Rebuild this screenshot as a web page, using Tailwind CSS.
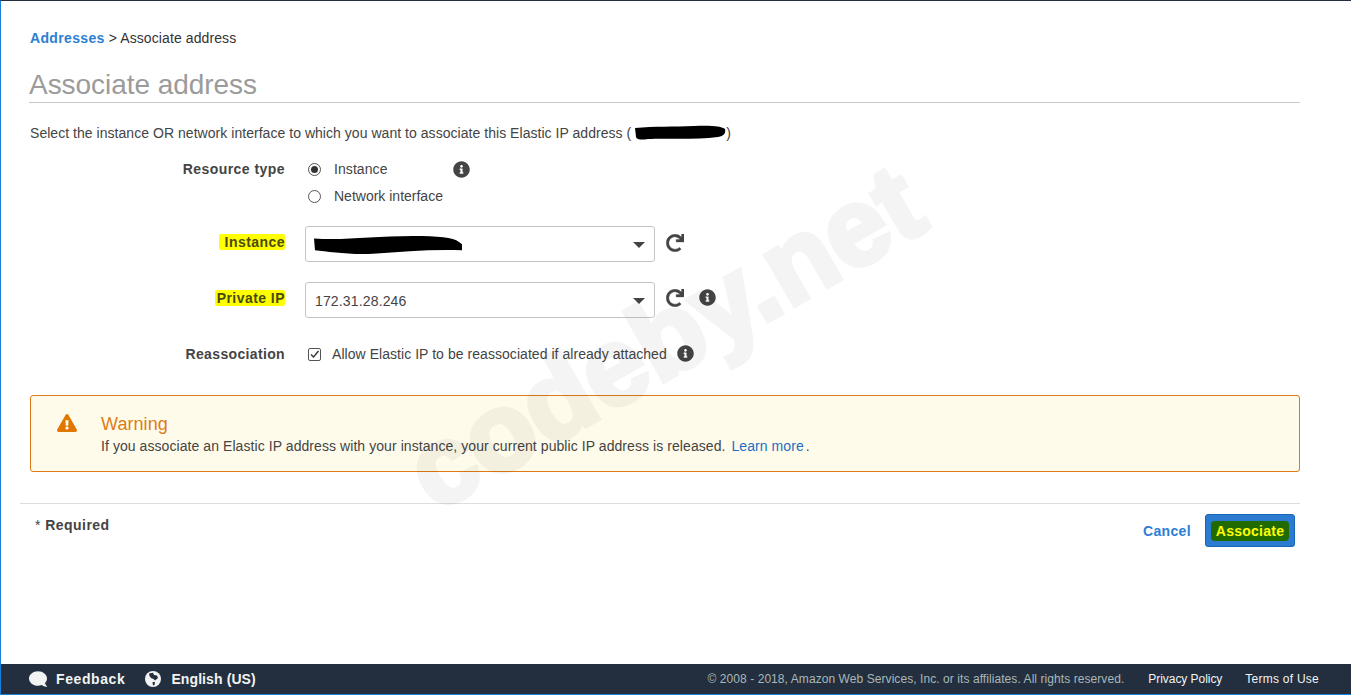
<!DOCTYPE html>
<html lang="en">
<head>
    <meta charset="UTF-8">
    <title>Associate address</title>
    <script src="https://cdn.jsdelivr.net/npm/@tailwindcss/browser@4"></script>
</head>
<body class="font-['Liberation_Sans',Arial,sans-serif] text-[#444] bg-white">
    <div class="relative h-[695px] flex flex-col overflow-hidden border-l border-t border-l-[#1a7fd6] border-t-[#232f3e]">
        <!-- Watermark -->
        <div class="absolute left-[377px] top-[281px] -rotate-[30deg] text-[110px] leading-none font-bold text-black opacity-[0.04] [-webkit-text-stroke:5px_black] pointer-events-none select-none whitespace-nowrap">codeby.net</div>

        <main class="flex-1 pl-[29px] pr-[51px] tracking-[0.07px]">
            <!-- Breadcrumb -->
            <div class="mt-[29px] text-[14px] leading-4 h-4">
                <a class="font-bold tracking-[0.35px] text-[#2b7ed3]">Addresses</a> <span class="text-[#333] tracking-[0.1px]">&gt; Associate address</span>
            </div>

            <h1 class="-ml-[1px] mt-[23px] text-[28px] leading-8 h-[33px] tracking-[-0.05px] text-[#9b9b9b] border-b border-[#c8c8c8] box-content">Associate address</h1>

            <p class="mt-[22px] text-[14px] leading-4 h-4 flex items-center whitespace-pre tracking-[0.04px]">Select the instance OR network interface to which you want to associate this Elastic IP address (<svg class="ml-[3px] w-[92px] h-[16px]" viewBox="0 0 92 16"><path d="M1 3 C20 1 40 2 60 1 C75 0 88 1 91 4 C92 8 90 11 84 12 C60 15 30 13 14 14 C8 15 3 15 2 12 Z" fill="#000"/></svg><span>)</span></p>

            <!-- Form -->
            <div class="mt-[19px] flex flex-col">
                <div class="flex h-[54px]">
                    <label class="w-[255px] text-right text-[14px] font-bold tracking-[0.45px] leading-4 pt-[1px]">Resource type</label>
                    <div class="ml-[23px] flex flex-col text-[14px] leading-4">
                        <div class="flex items-center h-[18px]">
                            <span class="w-[13px] h-[13px] rounded-full border border-[#555] flex items-center justify-center"><span class="w-[7px] h-[7px] rounded-full bg-[#333]"></span></span>
                            <span class="ml-[13px] w-[119px]">Instance</span>
                            <svg class="w-[17px] h-[17px]" viewBox="0 0 512 512"><path fill="#444" d="M256 8C119.043 8 8 119.083 8 256c0 136.997 111.043 248 248 248s248-111.003 248-248C504 119.083 392.957 8 256 8zm0 110c23.196 0 42 18.804 42 42s-18.804 42-42 42-42-18.804-42-42 18.804-42 42-42zm56 254c0 6.627-5.373 12-12 12h-88c-6.627 0-12-5.373-12-12v-24c0-6.627 5.373-12 12-12h12v-64h-12c-6.627 0-12-5.373-12-12v-24c0-6.627 5.373-12 12-12h64c6.627 0 12 5.373 12 12v100h12c6.627 0 12 5.373 12 12v24z"/></svg>
                        </div>
                        <div class="flex items-center h-[18px] mt-[9px]">
                            <span class="w-[13px] h-[13px] rounded-full border border-[#555]"></span>
                            <span class="ml-[13px] tracking-normal">Network interface</span>
                        </div>
                    </div>
                </div>

                <div class="flex mt-[12px] h-[36px]">
                    <div class="w-[255px] flex justify-end items-start pt-[8px]">
                        <label class="bg-[#ffff00] rounded-[2px] text-[14px] font-bold tracking-[0.45px] leading-4 text-[#4a4a10] pl-[6px]">Instance</label>
                    </div>
                    <div class="ml-[20px] w-[350px] h-[36px] border border-[#c4c4c4] rounded-[3px] flex items-center justify-between pl-[7px] pr-[9px]">
                        <svg class="w-[150px] h-[19px] mt-[2px]" viewBox="0 0 150 16" preserveAspectRatio="none"><path d="M1 2 C30 4 60 0 100 0 C125 0 140 1 146 5 L149 7 L149 12 C120 11 90 13 60 15 C35 16 15 13 2 12 Z" fill="#000"/></svg>
                        <span class="w-0 h-0 border-x-[6px] border-x-transparent border-t-[6px] border-t-[#444] mt-[1px]"></span>
                    </div>
                    <svg class="ml-[11px] mt-[8px] w-[18px] h-[18px]" viewBox="0 0 512 512"><path fill="#444" stroke="#444" stroke-width="12" d="M500.33 0h-47.41a12 12 0 0 0-12 12.57l4 82.76A247.42 247.42 0 0 0 256 8C119.34 8 7.9 119.53 8 256.19 8.1 393.07 119.1 504 256 504a247.1 247.1 0 0 0 166.18-63.91 12 12 0 0 0 .48-17.43l-34-34a12 12 0 0 0-16.38-.55A176 176 0 1 1 402.1 157.8l-101.53-4.87a12 12 0 0 0-12.57 12v47.41a12 12 0 0 0 12 12h200.33a12 12 0 0 0 12-12V12a12 12 0 0 0-12-12z"/></svg>
                </div>

                <div class="flex mt-[20px] h-[36px]">
                    <div class="w-[255px] flex justify-end items-start pt-[8px]">
                        <label class="bg-[#ffff00] rounded-[2px] text-[14px] font-bold tracking-[0.45px] leading-4 text-[#4a4a10] pl-[2px]">Private IP</label>
                    </div>
                    <div class="ml-[20px] w-[350px] h-[36px] border border-[#c4c4c4] rounded-[3px] flex items-center justify-between pl-[9px] pr-[9px] text-[14px]">
                        <span class="mt-[2px] tracking-[0.15px]">172.31.28.246</span>
                        <span class="w-0 h-0 border-x-[6px] border-x-transparent border-t-[6px] border-t-[#444] mt-[1px]"></span>
                    </div>
                    <svg class="ml-[11px] mt-[7px] w-[18px] h-[18px]" viewBox="0 0 512 512"><path fill="#444" stroke="#444" stroke-width="12" d="M500.33 0h-47.41a12 12 0 0 0-12 12.57l4 82.76A247.42 247.42 0 0 0 256 8C119.34 8 7.9 119.53 8 256.19 8.1 393.07 119.1 504 256 504a247.1 247.1 0 0 0 166.18-63.91 12 12 0 0 0 .48-17.43l-34-34a12 12 0 0 0-16.38-.55A176 176 0 1 1 402.1 157.8l-101.53-4.87a12 12 0 0 0-12.57 12v47.41a12 12 0 0 0 12 12h200.33a12 12 0 0 0 12-12V12a12 12 0 0 0-12-12z"/></svg>
                    <svg class="ml-[15px] mt-[7px] w-[17px] h-[17px]" viewBox="0 0 512 512"><path fill="#444" d="M256 8C119.043 8 8 119.083 8 256c0 136.997 111.043 248 248 248s248-111.003 248-248C504 119.083 392.957 8 256 8zm0 110c23.196 0 42 18.804 42 42s-18.804 42-42 42-42-18.804-42-42 18.804-42 42-42zm56 254c0 6.627-5.373 12-12 12h-88c-6.627 0-12-5.373-12-12v-24c0-6.627 5.373-12 12-12h12v-64h-12c-6.627 0-12-5.373-12-12v-24c0-6.627 5.373-12 12-12h64c6.627 0 12 5.373 12 12v100h12c6.627 0 12 5.373 12 12v24z"/></svg>
                </div>

                <div class="flex mt-[27px] h-[18px] items-center">
                    <label class="w-[255px] text-right text-[14px] font-bold tracking-[0.35px] leading-4">Reassociation</label>
                    <span class="ml-[23px] w-[13px] h-[13px] border border-[#555] rounded-[2px] flex items-center justify-center">
                        <svg class="w-[11px] h-[11px]" viewBox="0 0 11 11"><path d="M2 5.5 L4.5 8 L9.5 2" fill="none" stroke="#333" stroke-width="1.4"/></svg>
                    </span>
                    <span class="ml-[11px] text-[14px] leading-4 tracking-[0.05px]">Allow Elastic IP to be reassociated if already attached</span>
                    <svg class="ml-[10px] self-start w-[17px] h-[17px]" viewBox="0 0 512 512"><path fill="#444" d="M256 8C119.043 8 8 119.083 8 256c0 136.997 111.043 248 248 248s248-111.003 248-248C504 119.083 392.957 8 256 8zm0 110c23.196 0 42 18.804 42 42s-18.804 42-42 42-42-18.804-42-42 18.804-42 42-42zm56 254c0 6.627-5.373 12-12 12h-88c-6.627 0-12-5.373-12-12v-24c0-6.627 5.373-12 12-12h12v-64h-12c-6.627 0-12-5.373-12-12v-24c0-6.627 5.373-12 12-12h64c6.627 0 12 5.373 12 12v100h12c6.627 0 12 5.373 12 12v24z"/></svg>
                </div>
            </div>

            <!-- Warning -->
            <div class="mt-[32px] h-[77px] border border-[#dd7b17] rounded-[3px] bg-[#fffbea] flex">
                <svg class="ml-[26px] mt-[17px] w-[20px] h-[20px]" viewBox="0 0 576 512"><path fill="#e07700" d="M569.517 440.013C587.975 472.007 564.806 512 527.94 512H48.054c-36.937 0-59.999-40.055-41.577-71.987L246.423 23.985c18.467-32.009 64.72-31.951 83.154 0l239.94 416.028zM288 354c-25.405 0-46 20.595-46 46s20.595 46 46 46 46-20.595 46-46-20.595-46-46-46zm-43.673-165.346l7.418 136c.347 6.364 5.609 11.346 11.982 11.346h48.546c6.373 0 11.635-4.982 11.982-11.346l7.418-136c.375-6.874-5.098-12.654-11.982-12.654h-63.383c-6.884 0-12.356 5.78-11.981 12.654z"/></svg>
                <div class="ml-[24px] mt-[18px]">
                    <div class="text-[18px] leading-[21px] text-[#dd7b17]">Warning</div>
                    <div class="text-[14px] leading-4 mt-[3px] flex whitespace-pre">If you associate an Elastic IP address with your instance, your current public IP address is released.<a class="ml-[6px] text-[#1a6fc4]">Learn more</a><span class="ml-[2px]">.</span></div>
                </div>
            </div>

            <!-- Actions -->
            <div class="mt-[31px] -ml-[10px] border-t border-[#ddd] flex justify-between">
                <span class="ml-[15px] mt-[13px] text-[14px] leading-4 h-4 font-bold tracking-[0.45px]"><span class="font-normal">*</span> Required</span>
                <div class="flex items-start mt-[10px] mr-[5px]">
                    <a class="mt-[9px] text-[14px] leading-4 font-bold tracking-[0.35px] text-[#2b7ed3]">Cancel</a>
                    <button class="ml-[14px] w-[90px] h-[33px] rounded-[3px] bg-[#2b7bd1] border border-[#1666b5] flex items-center justify-center">
                        <span class="bg-[#206a00] text-[#ffff00] text-[14px] leading-4 font-bold tracking-[0.25px] px-[5px] py-[2px] rounded-[4px]">Associate</span>
                    </button>
                </div>
            </div>
        </main>

        <!-- Footer -->
        <footer class="h-[31px] bg-[#232f3e] border-b border-[#1a7fd6] flex items-center justify-between text-[12px] text-[#f2f3f3] pl-[28px] pr-[32px]">
            <div class="flex items-center font-bold text-[14px]">
                <svg class="w-[18px] h-[18px]" viewBox="0 0 512 512"><path fill="#f2f3f3" transform="matrix(-1 0 0 1 512 0)" d="M256 32C114.6 32 0 125.1 0 240c0 49.6 21.4 95 57 130.7C44.5 421.1 2.7 466 2.2 466.5c-2.2 2.3-2.8 5.7-1.5 8.7S4.8 480 8 480c66.3 0 116-31.8 140.6-51.4 32.7 12.3 69 19.4 107.4 19.4 141.4 0 256-93.1 256-208S397.4 32 256 32z"/></svg>
                <span class="ml-[9px] tracking-[0.6px]">Feedback</span>
                <svg class="ml-[20px] w-4 h-4" viewBox="0 0 16 16"><circle cx="8" cy="8" r="8" fill="#f2f3f3"/><path d="M4 2.5 L8 1.8 L9 4 L12 4.5 L13 7 L10 9.5 L8.5 8 L6 7 L4.5 5 Z M7.5 11 L10 11 L9.5 14 L8 14.5 Z" fill="#232f3e"/></svg>
                <span class="ml-[10px] tracking-[0.1px]">English (US)</span>
            </div>
            <div class="flex items-center">
                <span class="text-[#aab7b8] tracking-[0.07px]">© 2008 - 2018, Amazon Web Services, Inc. or its affiliates. All rights reserved.</span>
                <a class="ml-[24px] tracking-[-0.05px]">Privacy Policy</a>
                <a class="ml-[23px] tracking-[0.25px]">Terms of Use</a>
            </div>
        </footer>
    </div>
</body>
</html>
